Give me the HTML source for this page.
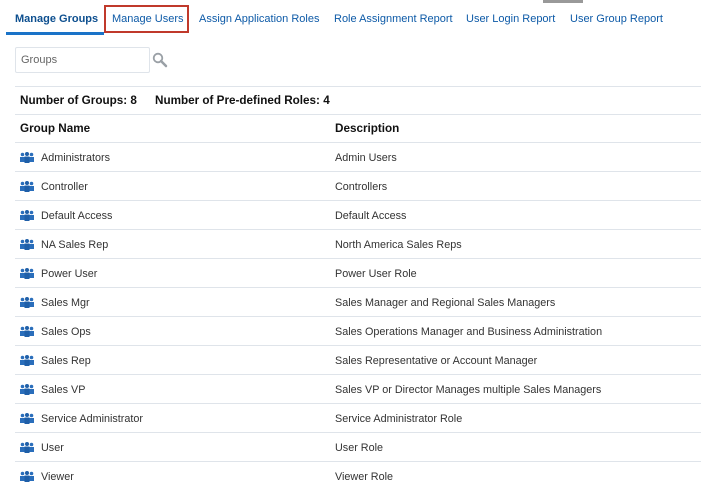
<!DOCTYPE html>
<html><head><style>
body{margin:0;width:701px;height:486px;overflow:hidden;background:#fff;font-family:"Liberation Sans",Arial,sans-serif;position:relative}
.a{position:absolute;white-space:nowrap}
.tab{font-size:11px;color:#0d5aa7;top:13px}
.line{position:absolute;left:15px;right:0;height:1px;background:#dfe4ea}
.row{position:absolute;left:0;right:0;height:29px;font-size:10.8px;color:#333}
.row span{position:absolute;top:9px}
</style></head><body>
<div class="a" style="left:543px;top:0;width:40px;height:3px;background:#999"></div>
<div class="a tab" style="left:15px;font-weight:bold;color:#0d4f8f">Manage Groups</div>
<div class="a" style="left:6px;top:32px;width:98px;height:3px;background:#1a73c8"></div>
<div class="a" style="left:104px;top:5px;width:81px;height:24px;border:2px solid #c0392b"></div>
<div class="a tab" style="left:112px">Manage Users</div>
<div class="a tab" style="left:199px">Assign Application Roles</div>
<div class="a tab" style="left:334px">Role Assignment Report</div>
<div class="a tab" style="left:466px">User Login Report</div>
<div class="a tab" style="left:570px">User Group Report</div>
<div class="a" style="left:15px;top:47px;width:133px;height:24px;border:1px solid #dfe4ea;border-radius:2px"></div>
<div class="a" style="left:21px;top:54px;font-size:11px;color:#666">Groups</div>
<svg class="a" style="left:152px;top:52px" width="16" height="16" viewBox="0 0 16 16"><circle cx="6" cy="6" r="4.3" fill="none" stroke="#9aa0a6" stroke-width="1.8"/><path d="M9 9l5 5" stroke="#9aa0a6" stroke-width="2.5" stroke-linecap="round"/></svg>
<div class="line" style="top:86px"></div>
<div class="a" style="left:20px;top:94px;font-size:11.7px;font-weight:bold;color:#111">Number of Groups: 8</div>
<div class="a" style="left:155px;top:94px;font-size:11.7px;font-weight:bold;color:#111">Number of Pre-defined Roles: 4</div>
<div class="line" style="top:114px"></div>
<div class="a" style="left:20px;top:122px;font-size:11.7px;font-weight:bold;color:#111">Group Name</div>
<div class="a" style="left:335px;top:122px;font-size:11.7px;font-weight:bold;color:#111">Description</div>
<div class="line" style="top:142px"></div>
<div id="rows"></div>
<script>
var d=[["Administrators","Admin Users"],["Controller","Controllers"],["Default Access","Default Access"],["NA Sales Rep","North America Sales Reps"],["Power User","Power User Role"],["Sales Mgr","Sales Manager and Regional Sales Managers"],["Sales Ops","Sales Operations Manager and Business Administration"],["Sales Rep","Sales Representative or Account Manager"],["Sales VP","Sales VP or Director Manages multiple Sales Managers"],["Service Administrator","Service Administrator Role"],["User","User Role"],["Viewer","Viewer Role"]];
var ic='<svg style="position:absolute;left:20px;top:9px" width="14" height="11" viewBox="0 0 14 11"><circle cx="2.5" cy="2.5" r="1.8" fill="#2a6ebb"/><circle cx="11.5" cy="2.5" r="1.8" fill="#2a6ebb"/><circle cx="7" cy="2" r="2" fill="#1f5fa8"/><rect x="0" y="5" width="4.5" height="5" fill="#2a6ebb"/><rect x="9.5" y="5" width="4.5" height="5" fill="#2a6ebb"/><rect x="4.5" y="4.5" width="5" height="6.5" fill="#1f5fa8"/></svg>';
var h='';d.forEach(function(r,i){var t=143+i*29;h+='<div class="row" style="top:'+t+'px">'+ic+'<span style="left:41px">'+r[0]+'</span><span style="left:335px">'+r[1]+'</span></div>';if(i<11)h+='<div class="line" style="top:'+(t+28)+'px"></div>';});
document.getElementById('rows').innerHTML=h;
</script>
</body></html>
